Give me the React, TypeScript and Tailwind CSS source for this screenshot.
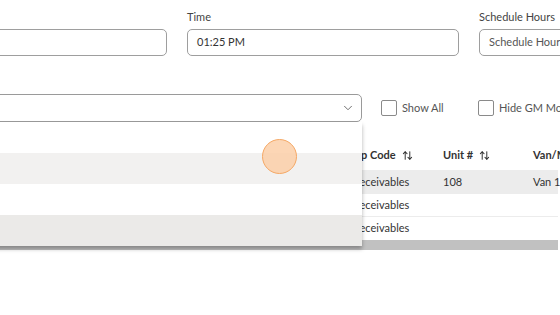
import { ArrowUpDown, ChevronDown } from "lucide-react";

const rows = [
  { code: "Receivables", unit: "108", van: "Van 108" },
  { code: "Receivables", unit: "", van: "" },
  { code: "Receivables", unit: "", van: "" },
];

function Field({ label, value, placeholder }: { label: string; value?: string; placeholder?: string }) {
  return (
    <div className="w-[272px] shrink-0">
      <div className="h-[13px] text-[11px] leading-[13px] text-[#444]">{label}</div>
      <div className="mt-[6px] flex h-[27px] items-center rounded-[5px] border border-[#9e9e9e] px-[9px] text-[11px] text-[#333] whitespace-nowrap">
        {value ?? <span className="text-[#555]">{placeholder}</span>}
      </div>
    </div>
  );
}

function Check({ label, className = "" }: { label: string; className?: string }) {
  return (
    <label className={`flex shrink-0 items-center gap-[5px] whitespace-nowrap text-[11px] text-[#555] ${className}`}>
      <span className="h-[16px] w-[16px] shrink-0 rounded-[2px] border border-[#8a8a8a] bg-white" />
      {label}
    </label>
  );
}

export default function App() {
  return (
    <div
      className="relative h-[315px] w-[560px] overflow-hidden bg-white"
      style={{ fontFamily: "Lato, 'Noto Sans', sans-serif" }}
    >
      <div className="-ml-[105px] w-[900px] pt-[10px]">
        <div className="flex gap-5">
          <Field label="" value="" />
          <Field label="Time" value="01:25 PM" />
          <Field label="Schedule Hours" placeholder="Schedule Hours" />
        </div>

        <div className="mt-[38px] flex items-center">
          <div className="relative z-10 w-[467px] shrink-0">
            <div className="flex h-[28px] items-center justify-end rounded-[5px] border border-[#9a9a9a] bg-white pr-[6px]">
              <ChevronDown className="h-[14px] w-[14px] text-[#666]" strokeWidth={1.6} />
            </div>
            <div className="absolute left-0 top-full w-full bg-white shadow-[0_3px_4px_rgba(0,0,0,0.3)]">
              <div className="h-[31px] bg-white" />
              <div className="h-[31px] bg-[#f2f1f0]" />
              <div className="h-[31px] bg-white" />
              <div className="h-[31px] bg-[#ebeae8]" />
            </div>
          </div>
          <div className="ml-[19px] flex">
            <Check label="Show All" className="w-[97px]" />
            <Check label="Hide GM Monthly" />
          </div>
        </div>

        <div className="mt-[22px] w-[663px] text-[11px] text-[#333]">
          <div className="flex h-[26px] items-center whitespace-nowrap pb-[4px] font-bold">
            <div className="w-[454px] shrink-0" />
            <div className="flex w-[94px] shrink-0 items-center gap-[6px]">
              Exp Code <ArrowUpDown className="h-[11px] w-[11px]" strokeWidth={2.2} />
            </div>
            <div className="flex w-[90px] shrink-0 items-center gap-[6px]">
              Unit # <ArrowUpDown className="h-[11px] w-[11px]" strokeWidth={2.2} />
            </div>
            <div className="shrink-0">Van/Mod</div>
          </div>
          {rows.map((r, i) => (
            <div
              key={i}
              className={`flex h-[23px] items-center whitespace-nowrap border-t border-[#ececec] ${i === 0 ? "bg-[#ececec]" : "bg-white"}`}
            >
              <div className="w-[458px] shrink-0" />
              <div className="w-[90px] shrink-0">{r.code}</div>
              <div className="w-[90px] shrink-0">{r.unit}</div>
              <div className="shrink-0">{r.van}</div>
            </div>
          ))}
          <div className="mt-[1px] h-[10px] bg-[#c1c1c1]" />
        </div>
      </div>

      <div className="absolute left-[262px] top-[139px] z-20 h-[35px] w-[35px] rounded-full border border-[#f5a865] bg-[#fbcfa8]/85" />
    </div>
  );
}
